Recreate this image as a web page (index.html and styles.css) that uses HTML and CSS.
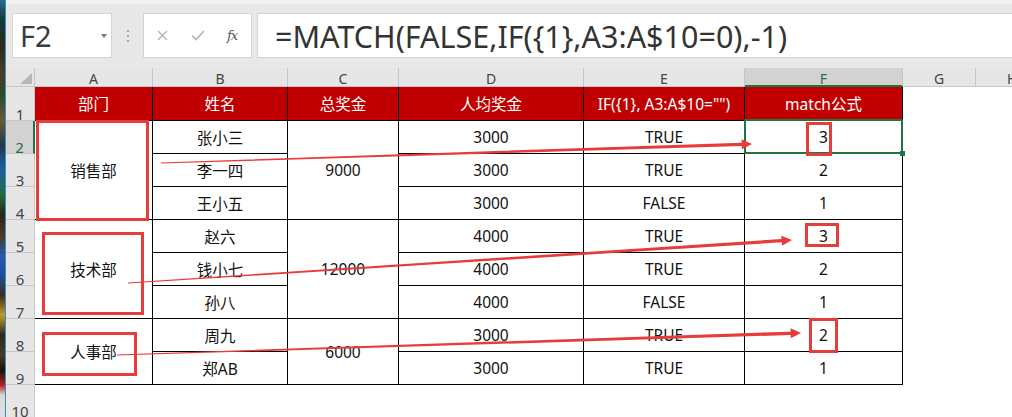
FILE: index.html
```html
<!DOCTYPE html>
<html lang="zh-CN">
<head>
<meta charset="utf-8">
<title>MATCH</title>
<link rel="stylesheet" href="styles.css">
</head>
<body>
<div class="app">
  <div class="wallpaper"></div>
  <div class="excel">
    <div class="fbar">
      <div class="namebox"><span class="ref">F2</span><span class="caret"></span></div>
      <div class="grip"><i></i><i></i><i></i></div>
      <div class="btns">
        <svg class="ico-x" width="11" height="11" viewBox="0 0 11 11"><path d="M1 1 L10 10 M10 1 L1 10" stroke="#b4b4b4" stroke-width="1.4" fill="none"/></svg>
        <svg class="ico-ok" width="14" height="11" viewBox="0 0 14 11"><path d="M1 5.5 L5 9.5 L13 1" stroke="#b4b4b4" stroke-width="1.6" fill="none"/></svg>
        <span class="fx">fx</span>
      </div>
      <div class="formula">=MATCH(FALSE,IF({1},A3:A$10=0),-1)</div>
    </div>
    <div class="sheet">
      <div class="corner"><svg width="12" height="11" viewBox="0 0 12 11"><polygon points="12,0 12,11 0,11" fill="#b8b8b8"/></svg></div>
      <div class="ch">A</div><div class="ch">B</div><div class="ch">C</div><div class="ch">D</div><div class="ch">E</div><div class="ch ch-sel">F</div><div class="ch">G</div><div class="ch ch-last">H</div>

      <div class="rh">1</div>
      <div class="c hd">部门</div><div class="c hd">姓名</div><div class="c hd">总奖金</div><div class="c hd">人均奖金</div><div class="c hd">IF({1}, A3:A$10="")</div><div class="c hd">match公式</div><div class="blank span2"></div>

      <div class="rh rh-sel">2</div>
      <div class="c span3">销售部</div><div class="c">张小三</div><div class="c span3">9000</div><div class="c">3000</div><div class="c">TRUE</div><div class="c sel">3</div><div class="blank span2"></div>

      <div class="rh">3</div>
      <div class="c">李一四</div><div class="c">3000</div><div class="c">TRUE</div><div class="c">2</div><div class="blank span2"></div>

      <div class="rh">4</div>
      <div class="c">王小五</div><div class="c">3000</div><div class="c">FALSE</div><div class="c">1</div><div class="blank span2"></div>

      <div class="rh">5</div>
      <div class="c span3">技术部</div><div class="c">赵六</div><div class="c span3">12000</div><div class="c">4000</div><div class="c">TRUE</div><div class="c">3</div><div class="blank span2"></div>

      <div class="rh">6</div>
      <div class="c">钱小七</div><div class="c">4000</div><div class="c">TRUE</div><div class="c">2</div><div class="blank span2"></div>

      <div class="rh">7</div>
      <div class="c">孙八</div><div class="c">4000</div><div class="c">FALSE</div><div class="c">1</div><div class="blank span2"></div>

      <div class="rh">8</div>
      <div class="c span2r">人事部</div><div class="c">周九</div><div class="c span2r">6000</div><div class="c">3000</div><div class="c">TRUE</div><div class="c">2</div><div class="blank span2"></div>

      <div class="rh">9</div>
      <div class="c">郑AB</div><div class="c">3000</div><div class="c">TRUE</div><div class="c">1</div><div class="blank span2"></div>

      <div class="rh">10</div>
      <div class="blank span8"></div>
    </div>
  </div>
</div>
<svg class="marks" width="1012" height="417" viewBox="0 0 1012 417">
  <g fill="none" stroke="#e63c3c" stroke-width="3">
    <rect x="37.5" y="121.5" width="110" height="98"/>
    <rect x="807.5" y="123.5" width="23" height="31"/>
    <rect x="43.5" y="233.5" width="99" height="80"/>
    <rect x="806.5" y="224.5" width="31" height="21"/>
    <rect x="43.5" y="333.5" width="92" height="41"/>
    <rect x="810.5" y="319.5" width="26" height="32"/>
  </g>
  <g fill="#e63c3c">
    <polygon transform="translate(161 163) rotate(-1.841)" points="0,-0.6 581,-1.7 581,-5 591.3,0 581,5 581,1.7 0,0.6"/>
    <polygon transform="translate(128 283) rotate(-3.705)" points="0,-0.6 655,-1.7 655,-5 665.4,0 655,5 655,1.7 0,0.6"/>
    <polygon transform="translate(117 355) rotate(-1.842)" points="0,-0.6 674,-1.7 674,-5 684.4,0 674,5 674,1.7 0,0.6"/>
  </g>
</svg>
</body>
</html>
```
FILE: styles.css
```css
html, body {
  margin: 0;
  padding: 0;
}
body {
  width: 1012px;
  height: 417px;
  overflow: hidden;
  position: relative;
  background: #fff;
  font-family: "Noto Sans", "Noto Sans CJK SC", sans-serif;
  color: #000;
}
.app {
  display: flex;
  height: 417px;
}
.wallpaper {
  width: 5px;
  flex: none;
  border-right: 1px solid #3d8fb8;
  background: linear-gradient(180deg,
    #2b6a8a 0px, #163a3a 20px, #2d2a1e 45px, #4a3a24 70px, #2b4a2e 95px,
    #6c5a38 120px, #23364a 145px, #2060a0 170px, #1e6e3a 195px, #2a2418 215px,
    #4e3a22 235px, #2a5aa8 255px, #1f4ea0 275px, #3a2f1c 295px, #c09a30 315px,
    #2a2a22 335px, #4a3a28 355px, #141414 370px, #b02020 385px, #d8d8d8 395px, #e0e0e0 417px);
}
.excel {
  flex: 1;
  min-width: 0;
  display: flex;
  flex-direction: column;
}

/* formula bar */
.fbar {
  height: 68px;
  flex: none;
  box-sizing: border-box;
  background: #e8e8e8;
  border-top: 4px solid #f1f1f1;
  padding: 9px 0 0 6px;
  display: flex;
  align-items: flex-start;
}
.namebox {
  width: 100px;
  height: 45px;
  box-sizing: border-box;
  background: #fff;
  border: 1px solid #d4d4d4;
  display: flex;
  align-items: center;
  padding-left: 7px;
  position: relative;
}
.ref {
  font-size: 29px;
  color: #3b3b3b;
  line-height: 1;
}
.caret {
  position: absolute;
  left: 88px;
  top: 20px;
  width: 0;
  height: 0;
  border-left: 3.5px solid transparent;
  border-right: 3.5px solid transparent;
  border-top: 4px solid #777;
}
.grip {
  width: 31px;
  height: 45px;
  display: flex;
  flex-direction: column;
  align-items: center;
  justify-content: center;
  gap: 3px;
}
.grip i {
  display: block;
  width: 2px;
  height: 2px;
  background: #a8a8a8;
}
.btns {
  width: 109px;
  height: 45px;
  box-sizing: border-box;
  background: #fff;
  border: 1px solid #d4d4d4;
  display: flex;
  align-items: center;
  padding-left: 13px;
}
.ico-x {
  display: block;
}
.ico-ok {
  display: block;
  margin-left: 23px;
}
.fx {
  margin-left: 22px;
  font-family: "DejaVu Serif", "Liberation Serif", serif;
  font-style: italic;
  font-size: 13px;
  color: #555;
  letter-spacing: -1px;
}
.formula {
  flex: 1;
  margin-left: 5px;
  height: 45px;
  box-sizing: border-box;
  background: #fff;
  border: 1px solid #d4d4d4;
  border-right: none;
  display: flex;
  align-items: center;
  padding-left: 17px;
  font-size: 30.5px;
  color: #333;
  white-space: nowrap;
  overflow: hidden;
}

/* sheet */
.sheet {
  display: grid;
  grid-template-columns: 29px 118px 135px 111px 185px 161px 158px 73px 1fr;
  grid-template-rows: 19px 34px repeat(9, 33px);
  background: #fff;
}
.corner {
  background: #e6e6e6;
  border-right: 1px solid #c6c6c6;
  border-bottom: 1px solid #c6c6c6;
  display: flex;
  align-items: flex-end;
  justify-content: flex-end;
  padding: 0 2px 2px 0;
}
.ch {
  background: #e6e6e6;
  border-right: 1px solid #c6c6c6;
  border-bottom: 1px solid #c6c6c6;
  display: flex;
  align-items: flex-end;
  justify-content: center;
  font-size: 14px;
  line-height: 13px;
  color: #444;
  padding-bottom: 1px;
}
.ch-sel {
  background: #d2d2d2;
  color: #217346;
  border-bottom: 2px solid #217346;
  padding-bottom: 0;
}
.ch-last {
  border-right: none;
  justify-content: flex-start;
  padding-left: 31px;
}
.rh {
  grid-column: 1;
  background: #e6e6e6;
  border-right: 1px solid #c6c6c6;
  border-bottom: 1px solid #c6c6c6;
  display: flex;
  align-items: flex-end;
  justify-content: center;
  font-size: 15px;
  line-height: 12px;
  color: #444;
}
.rh-sel {
  background: #d2d2d2;
  color: #217346;
  border-right: 2px solid #217346;
}
.c {
  border-right: 1px solid #000;
  border-bottom: 1px solid #000;
  display: flex;
  align-items: center;
  justify-content: center;
  font-size: 15.5px;
  color: #111;
  white-space: nowrap;
}
.hd {
  background: #c00000;
  color: #fff;
}
.span3 {
  grid-row: span 3;
}
.span2r {
  grid-row: span 2;
}
.span2 {
  grid-column: span 2;
}
.span8 {
  grid-column: span 8;
}
.sel {
  position: relative;
}
.sel::after {
  content: "";
  position: absolute;
  left: -1px;
  top: -2px;
  right: -1px;
  bottom: -1px;
  border: 2px solid #217346;
}
.sel::before {
  content: "";
  position: absolute;
  right: -3px;
  bottom: -3px;
  width: 5px;
  height: 5px;
  background: #217346;
  z-index: 1;
}

/* annotations */
.marks {
  position: absolute;
  left: 0;
  top: 0;
  pointer-events: none;
}
```
